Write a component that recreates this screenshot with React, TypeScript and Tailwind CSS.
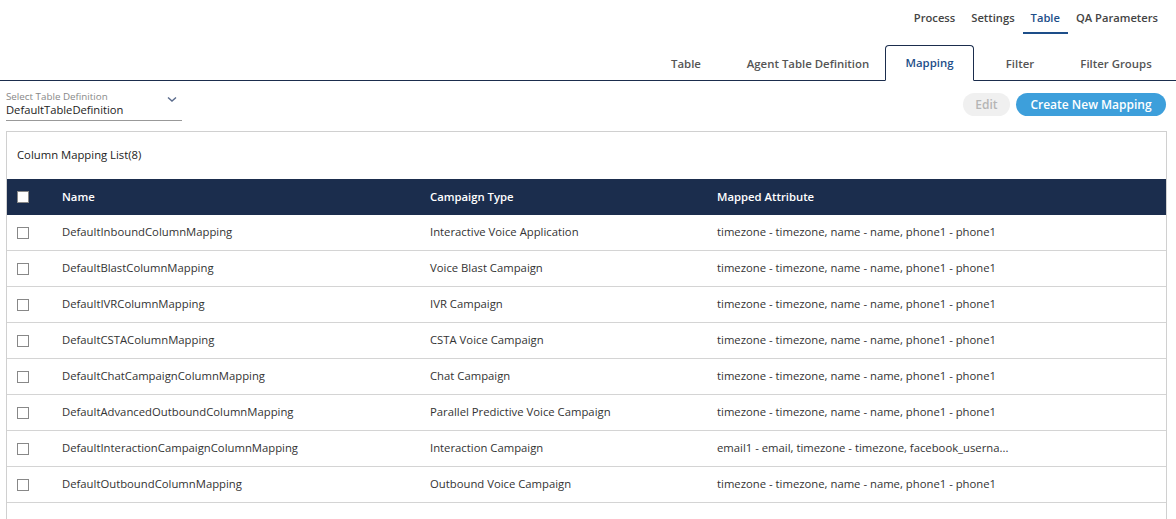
import React from "react";

const rows = [
  ["DefaultInboundColumnMapping", "Interactive Voice Application", "timezone - timezone, name - name, phone1 - phone1"],
  ["DefaultBlastColumnMapping", "Voice Blast Campaign", "timezone - timezone, name - name, phone1 - phone1"],
  ["DefaultIVRColumnMapping", "IVR Campaign", "timezone - timezone, name - name, phone1 - phone1"],
  ["DefaultCSTAColumnMapping", "CSTA Voice Campaign", "timezone - timezone, name - name, phone1 - phone1"],
  ["DefaultChatCampaignColumnMapping", "Chat Campaign", "timezone - timezone, name - name, phone1 - phone1"],
  ["DefaultAdvancedOutboundColumnMapping", "Parallel Predictive Voice Campaign", "timezone - timezone, name - name, phone1 - phone1"],
  ["DefaultInteractionCampaignColumnMapping", "Interaction Campaign", "email1 - email, timezone - timezone, facebook_userna..."],
  ["DefaultOutboundColumnMapping", "Outbound Voice Campaign", "timezone - timezone, name - name, phone1 - phone1"],
];

export default function App() {
  return (
    <div className="w-[1176px] h-[519px] overflow-hidden bg-white text-[#333]" style={{ fontFamily: '"Open Sans", "Noto Sans", sans-serif' }}>
      {/* top nav */}
      <div className="flex justify-end h-[36px] pr-[10px] text-[11.2px] font-semibold">
        <div className="flex items-center">
          <div className="px-[8px] h-[36px] flex items-center text-[#444]">Process</div>
          <div className="px-[8px] h-[36px] flex items-center text-[#444]">Settings</div>
          <div className="px-[8px] h-[36px] flex items-center text-[#1d4e89] relative">
            Table
            <div className="absolute left-0 right-0 bottom-[2px] h-[2px] bg-[#1d4e89]"></div>
          </div>
          <div className="px-[8px] h-[36px] flex items-center text-[#444]">QA Parameters</div>
        </div>
      </div>
      {/* tabs */}
      <div className="flex justify-end items-end h-[45px] border-b border-[#1b2d4d] pr-[10px]">
        <div className="flex items-end text-[11.4px] font-semibold text-[#555] mb-[-1px]">
          <div className="w-[90px] h-[35px] flex items-center justify-center">Table</div>
          <div className="w-[154px] h-[35px] flex items-center justify-center">Agent Table Definition</div>
          <div className="w-[89px] h-[36px] flex items-center justify-center border border-[#1b2d4d] border-b-white rounded-t-[4px] bg-white text-[#1d4e89]">Mapping</div>
          <div className="w-[92px] h-[35px] flex items-center justify-center">Filter</div>
          <div className="w-[100px] h-[35px] flex items-center justify-center">Filter Groups</div>
        </div>
      </div>
      {/* controls */}
      <div className="flex justify-between items-start px-[6px] pt-[10px]">
        <div className="w-[176px] border-b border-[#999] pb-[3px] relative">
          <div className="text-[9.8px] text-[#888] leading-[11px]">Select Table Definition</div>
          <div className="text-[11.2px] text-[#222] leading-[15px]">DefaultTableDefinition</div>
          <svg className="absolute right-[5px] top-[5px]" width="10" height="7" viewBox="0 0 10 7">
            <path d="M1 1.5 L5 5 L9 1.5" fill="none" stroke="#5a6b8c" strokeWidth="1.4" />
          </svg>
        </div>
        <div className="flex gap-[6px] mt-[2px] mr-[4px]">
          <div className="w-[47px] h-[23px] rounded-full bg-[#f0f0f0] text-[#b5b5b5] text-[12px] font-semibold flex items-center justify-center">Edit</div>
          <div className="w-[150px] h-[23px] rounded-full bg-[#3d9fdb] text-white text-[12px] font-semibold flex items-center justify-center">Create New Mapping</div>
        </div>
      </div>
      {/* card */}
      <div className="mx-[6px] mt-[10px] w-[1161px] border border-[#d0d0d0] border-b-0 h-[400px]">
        <div className="h-[47px] flex items-center pl-[10px] text-[11.3px] text-[#222]">Column Mapping List(8)</div>
        <div className="flex items-center h-[36px] bg-[#1b2d4d] text-white text-[11.3px] font-semibold">
          <div className="w-[55px] pl-[10px] flex items-center">
            <div className="w-[12px] h-[12px] bg-white border border-[#888]"></div>
          </div>
          <div className="w-[368px]">Name</div>
          <div className="w-[287px]">Campaign Type</div>
          <div className="flex-1">Mapped Attribute</div>
        </div>
        {rows.map((r, i) => (
          <div key={i} className="flex items-center h-[36px] border-b border-[#d4d4d4] text-[11.3px] text-[#333]">
            <div className="w-[55px] pl-[10px] flex items-center">
              <div className="w-[12px] h-[12px] bg-white border border-[#888]"></div>
            </div>
            <div className="w-[368px]">{r[0]}</div>
            <div className="w-[287px]">{r[1]}</div>
            <div className="flex-1">{r[2]}</div>
          </div>
        ))}
      </div>
    </div>
  );
}
